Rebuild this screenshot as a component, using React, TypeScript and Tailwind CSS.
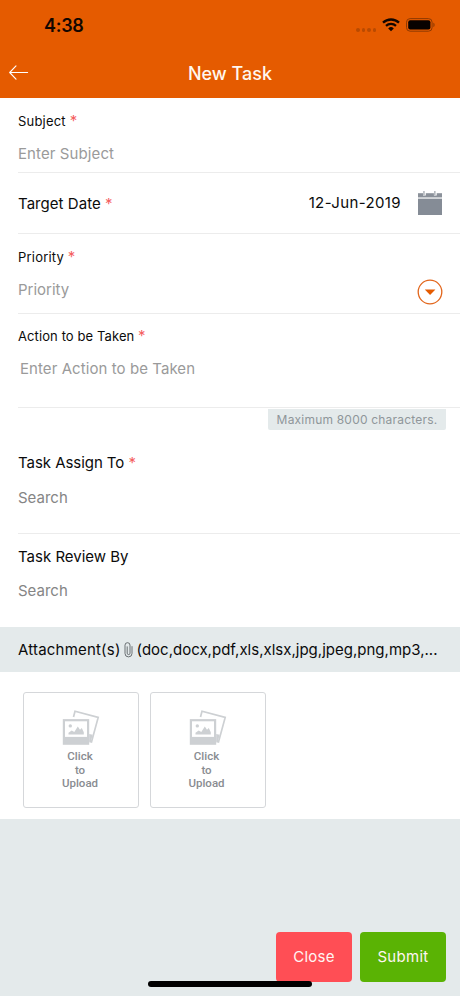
import React from 'react';

const Required = () => <span className="text-[15px] leading-none text-[#f4605f]">*</span>;

const WifiIcon = () => (
  <svg width="18" height="14" viewBox="0 0 18 14" fill="none" stroke="#120600">
    <path d="M1 4.7a11.6 11.6 0 0 1 16 0" strokeWidth="2.3" />
    <path d="M4 7.9a7.3 7.3 0 0 1 10 0" strokeWidth="2.2" />
    <path d="M9 13.2 6.2 10.4a4 4 0 0 1 5.6 0Z" fill="#120600" stroke="none" />
  </svg>
);

const BatteryIcon = () => (
  <svg width="30" height="14" viewBox="0 0 30 14">
    <rect x="0.5" y="0.6" width="25.6" height="12.6" rx="3.6" fill="none" stroke="#8f3a02" />
    <rect x="2.2" y="2.3" width="22.2" height="9.2" rx="2" fill="#080200" />
    <path d="M27.4 4.8c1.6.5 1.6 3.7 0 4.2Z" fill="#8f3a02" />
  </svg>
);

const BackIcon = () => (
  <svg width="20" height="16" viewBox="0 0 20 16" fill="none" stroke="#fff" strokeWidth="1.1" strokeLinecap="round" strokeLinejoin="round">
    <path d="M18.6 7.5H.7M7 .9.7 7.5 7 14.2" />
  </svg>
);

const CalendarIcon = () => (
  <svg width="24" height="24" viewBox="0 0 24 24">
    <path d="M0 2.2h24v4.3H0z" fill="#8b919a" />
    <path d="M0 8h24v16H0z" fill="#858c96" />
    <path d="M0 6.5h24V8H0z" fill="#d3d6d9" />
    <path d="M5 0h2.8v4.4H5zM15.9 0h2.8v4.4h-2.8z" fill="#fff" />
    <path d="M5.3 0h1.3v4H5.3zM16.2 0h1.3v4h-1.3z" fill="#a4a9b0" />
  </svg>
);

const DropdownIcon = () => (
  <svg width="26" height="26" viewBox="0 0 26 26">
    <circle cx="13" cy="13" r="11.8" fill="none" stroke="#e2661c" strokeWidth="1.3" />
    <path d="M7.8 10.6h10.6L13.1 16Z" fill="#e55b00" />
  </svg>
);

const ClipIcon = () => (
  <svg width="9" height="16" viewBox="0 0 9 16" fill="none" stroke="#5b6265" strokeWidth="0.9" strokeLinecap="round">
    <path d="M8 4.6v6.8a3.5 3.5 0 0 1-7 0V3.2a2.5 2.5 0 0 1 5 0v8a1.4 1.4 0 0 1-2.8 0V4.8" />
  </svg>
);

const PhotosIcon = () => (
  <svg width="38" height="36" viewBox="0 0 38 36">
    <path d="M11.5 7 13 1.3l23.2 6.1L29.5 32l-2.2-.6" fill="none" stroke="#cdd0d3" strokeWidth="1.7" />
    <path d="m27.2 24 3.5.8-1.8 6.8-1.7-.4z" fill="#cdd0d3" />
    <path d="M.8 9.1h26.4v25.7H.8z" fill="#cdd0d3" />
    <path d="M3 11.3h22v15.6H3z" fill="#fff" />
    <circle cx="8.3" cy="15.9" r="1.7" fill="#cdd0d3" />
    <path d="M6.5 24.6v-1.8l3.2-2.2 2.6 1.3 3.5-5.4 2.2 3.2 1.8-1.6 2 4.2v2.3z" fill="#cdd0d3" />
  </svg>
);

const UploadTile = () => (
  <button className="flex h-[116px] w-[116px] flex-col items-center rounded-[3px] border border-[#d5d7da] bg-white pt-[17px]">
    <PhotosIcon />
    <span className="mt-[4px] mr-[2px] w-12 text-center font-[Roboto] text-[11.5px] leading-[13.6px] font-medium text-[#898c91]">
      Click
      <br />
      to
      <br />
      Upload
    </span>
  </button>
);

export default function App() {
  return (
    <div className="flex h-[996px] w-[460px] flex-col overflow-hidden bg-[#e4eaeb] font-[Inter,sans-serif] text-[#0b0b0b]">
      {/* Header */}
      <header className="h-[98px] bg-[#e55b00]">
        <div className="flex h-[50px] items-start justify-between pr-[24px] pl-[44px]">
          <span className="mt-[14px] text-[18px] leading-6 font-semibold tracking-[-0.3px] text-[#120600]">4:38</span>
          <div className="mt-[18px] flex items-start">
            <div className="mt-[10px] mr-[6px] flex gap-[2px]">
              {[0, 1, 2, 3].map((i) => (
                <span key={i} className="h-[3.5px] w-[3.5px] rounded-full bg-[#b94a01]" />
              ))}
            </div>
            <WifiIcon />
            <span className="ml-[6px]">
              <BatteryIcon />
            </span>
          </div>
        </div>
        <div className="grid h-[46px] grid-cols-[40px_1fr_40px] items-center pl-[9px]">
          <button aria-label="Back">
            <BackIcon />
          </button>
          <h1 className="-ml-[9px] text-center text-[18px] font-medium text-[#fff7ef]">New Task</h1>
        </div>
      </header>

      {/* Form */}
      <main className="bg-white pl-[18px]">
        <div className="h-[75px] border-b border-[#ececec] pt-[14px]">
          <label className="block text-[13px] leading-[18px] tracking-[0.2px]">
            Subject <Required />
          </label>
          <div className="mt-[14px] text-[15px] leading-5 tracking-[0.1px] text-[#9a9a9a]">Enter Subject</div>
        </div>

        <div className="flex h-[61px] items-center justify-between border-b border-[#ececec] pr-[18px] text-[15px]">
          <label className="pt-[2px] tracking-[0.05px]">
            Target Date <Required />
          </label>
          <div className="flex items-center gap-[17px]">
            <span className="pt-px tracking-[0.38px]">12-Jun-2019</span>
            <CalendarIcon />
          </div>
        </div>

        <div className="flex h-[80px] items-start justify-between border-b border-[#ececec] pr-[17px]">
          <div className="pt-[14px]">
            <label className="block text-[13px] leading-[18px] tracking-[0.2px]">
              Priority <Required />
            </label>
            <div className="mt-[14px] text-[15px] leading-5 text-[#9a9a9a]">Priority</div>
          </div>
          <button aria-label="Choose priority" className="mt-[45px]">
            <DropdownIcon />
          </button>
        </div>

        <div className="h-[94px] border-b border-[#ececec] pt-[13px]">
          <label className="block text-[13px] leading-[18px] tracking-[0.1px]">
            Action to be Taken <Required />
          </label>
          <div className="mt-[14px] pl-[2px] text-[15px] leading-5 tracking-[0.07px] text-[#9a9a9a]">
            Enter Action to be Taken
          </div>
        </div>

        <div className="flex h-[42px] justify-end pt-[1px] pr-[14px]">
          <span className="flex h-[21px] w-[178px] items-center justify-center rounded-b-[2px] bg-[#e4eaeb] text-[12px] tracking-[0.2px] text-[#8f969a]">
            Maximum 8000 characters.
          </span>
        </div>

        <div className="h-[84px] border-b border-[#ececec] pt-[3px]">
          <label className="block text-[15px] leading-5 tracking-[-0.05px]">
            Task Assign To <Required />
          </label>
          <div className="mt-[14px] text-[15px] leading-[21px] text-[#858585]">Search</div>
        </div>

        <div className="h-[93px] pt-[13px]">
          <label className="block text-[15px] leading-5">Task Review By</label>
          <div className="mt-[14px] text-[15px] leading-5 text-[#858585]">Search</div>
        </div>
      </main>

      {/* Attachments */}
      <div className="flex h-[45px] items-center pt-px pl-[18px] text-[15px] whitespace-nowrap">
        <span className="tracking-[0.2px]">Attachment(s)</span>
        <span className="mr-[4px] ml-[3px]">
          <ClipIcon />
        </span>
        <span className="tracking-[0.01px]">(doc,docx,pdf,xls,xlsx,jpg,jpeg,png,mp3,...</span>
      </div>
      <div className="flex h-[147px] gap-[10.5px] bg-white pt-[20px] pl-[23px]">
        <UploadTile />
        <UploadTile />
      </div>

      {/* Actions */}
      <footer className="relative flex flex-1 items-end justify-end gap-2 pr-[14px] pb-[14px] text-[15px] tracking-[0.3px] text-[#fff5f2]">
        <button className="h-[50px] w-[76px] rounded-[4px] bg-[#ff4e55]">Close</button>
        <button className="h-[50px] w-[86px] rounded-[4px] bg-[#5ab304]">Submit</button>
        <div className="absolute bottom-[9px] left-[148px] h-[6px] w-[164px] rounded-full bg-black" />
      </footer>
    </div>
  );
}
